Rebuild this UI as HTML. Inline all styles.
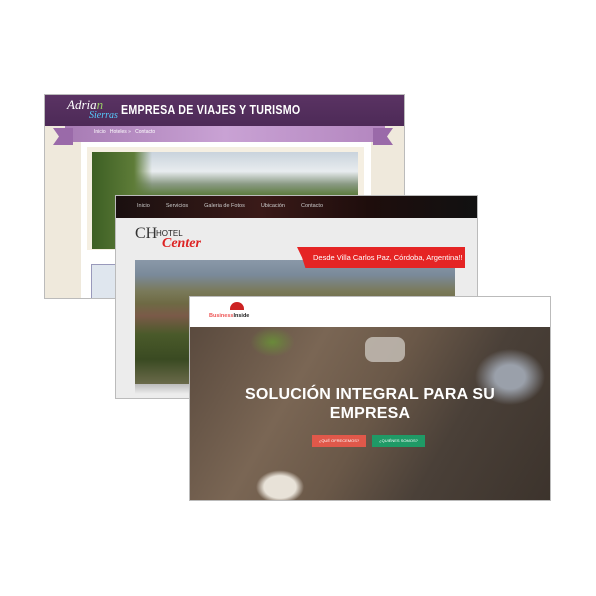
<!DOCTYPE html>
<html><head><style>
body{margin:0;width:596px;height:596px;background:#fff;position:relative;overflow:hidden;font-family:"Liberation Sans",sans-serif}
.a{position:absolute}
</style></head><body>
<!-- Screen 1 -->
<div class="a" style="left:44px;top:94px;width:361px;height:205px;border:1px solid #bbb;box-sizing:border-box;background:#efe9dc;overflow:hidden">
 <div class="a" style="left:0;top:0;width:100%;height:31px;background:linear-gradient(#5a3363,#4d2a57)"></div>
 <div class="a" style="left:22px;top:2px;font:italic 13px 'Liberation Serif',serif;color:#fff">Adria<span style="color:#9c6">n</span></div>
 <div class="a" style="left:44px;top:15px;font:italic 10px 'Liberation Serif',serif;color:#5cf">Sierras</div>
 <div class="a" style="left:76px;top:7px;font:bold 13px 'Liberation Sans',sans-serif;color:#fff;letter-spacing:0.3px;transform:scaleX(0.82);transform-origin:left">EMPRESA DE VIAJES Y TURISMO</div>
 <div class="a" style="left:20px;top:31px;width:320px;height:16px;background:linear-gradient(90deg,#a77bb4,#c9a2d4,#b386bf)"></div>
 <div class="a" style="left:8px;top:33px;width:20px;height:17px;background:#9a6aa9;clip-path:polygon(0 0,100% 0,100% 100%,0 100%,30% 50%)"></div>
 <div class="a" style="left:328px;top:33px;width:20px;height:17px;background:#9a6aa9;clip-path:polygon(0 0,100% 0,70% 50%,100% 100%,0 100%)"></div>
 <div class="a" style="left:49px;top:34px;font-size:5px;color:#fff">Inicio &nbsp; Hoteles » &nbsp; Contacto</div>
 <div class="a" style="left:36px;top:47px;width:290px;height:160px;background:#fff"></div>
 <div class="a" style="left:42px;top:52px;width:277px;height:103px;background:#f5efe2"></div>
 <div class="a" style="left:47px;top:57px;width:266px;height:97px;background:linear-gradient(180deg,#c9d3dc 0%,#e8ecef 20%,#8a9a84 33%,#5a7a3a 45%,#7c8f56 60%,#556d2f 80%,#8a9a6a 100%)"></div>
 <div class="a" style="left:47px;top:57px;width:60px;height:97px;background:linear-gradient(90deg,#3d5f24,#5e7c38 70%,transparent)"></div>
 <div class="a" style="left:46px;top:169px;width:30px;height:40px;background:#dfe6ee;border:1px solid #99b"></div>
</div>
<!-- Screen 2 -->
<div class="a" style="left:115px;top:195px;width:363px;height:204px;border:1px solid #bbb;box-sizing:border-box;background:#ececec;overflow:hidden">
 <div class="a" style="left:0;top:0;width:100%;height:22px;background:linear-gradient(90deg,#1a1010,#3a1a18 40%,#1e0d0c 70%,#111)"></div>
 <div class="a" style="left:21px;top:7px;font-size:5.5px;color:#ccc;word-spacing:0">Inicio<span style="margin-left:16px">Servicios</span><span style="margin-left:16px">Galeria de Fotos</span><span style="margin-left:16px">Ubicación</span><span style="margin-left:16px">Contacto</span></div>
 <div class="a" style="left:19px;top:29px;font:16px 'Liberation Serif',serif;color:#333">CH</div>
 <div class="a" style="left:40px;top:33px;font:8px 'Liberation Sans',sans-serif;color:#222">HOTEL</div>
 <div class="a" style="left:46px;top:40px;font:italic bold 14px 'Liberation Serif',serif;color:#d22">Center</div>
 <div class="a" style="left:19px;top:64px;width:320px;height:124px;background:linear-gradient(180deg,#8a98a8 0%,#7a8a9a 12%,#7a7a5a 25%,#6e6a44 35%,#7a5a48 45%,#4a5a2a 60%,#3a4a22 80%,#6a6a4a 100%)"></div>
 <div class="a" style="left:19px;top:188px;width:320px;height:10px;background:linear-gradient(#bbb,#ececec)"></div>
 <div class="a" style="left:181px;top:51px;width:168px;height:21px;background:#e52424;clip-path:polygon(0 0,100% 0,100% 100%,5% 100%,3% 50%)"></div>
 <div class="a" style="left:197px;top:57px;font-size:7.5px;color:#fff">Desde Villa Carlos Paz, Córdoba, Argentina!!</div>
</div>
<!-- Screen 3 -->
<div class="a" style="left:189px;top:296px;width:362px;height:205px;border:1px solid #bbb;box-sizing:border-box;background:#fff;overflow:hidden">
 <div class="a" style="left:40px;top:5px;width:14px;height:8px;border-radius:8px 8px 0 0;background:#c22"></div>
 <div class="a" style="left:19px;top:16px;font:bold 5.5px 'Liberation Sans',sans-serif;color:#e55">Business<span style="color:#222">Inside</span></div>
 <div class="a" style="left:0;top:30px;width:100%;height:175px;background:
 radial-gradient(ellipse 40px 28px at 90px 160px,#e8e2d8 40%,transparent 60%),
 radial-gradient(ellipse 50px 40px at 320px 50px,#9aa0aa 30%,transparent 70%),
 linear-gradient(120deg,#5a4a3e 0%,#7a6654 30%,#6a5848 50%,#4a4038 70%,#3c332c 100%)"></div>
 <div class="a" style="left:60px;top:30px;width:45px;height:30px;background:radial-gradient(#6a8a3a,transparent 70%)"></div>
 <div class="a" style="left:175px;top:40px;width:40px;height:25px;border-radius:8px;background:#c9c3bb;opacity:.8"></div>
 <div class="a" style="left:0;top:88px;width:100%;text-align:center;font:bold 16px 'Liberation Sans',sans-serif;color:#fff;line-height:19px;letter-spacing:0.2px">SOLUCIÓN INTEGRAL PARA SU<br>EMPRESA</div>
 <div class="a" style="left:122px;top:138px;width:54px;height:12px;background:#e0584a;color:#fff;font-size:4px;line-height:12px;text-align:center">¿QUÉ OFRECEMOS?</div>
 <div class="a" style="left:182px;top:138px;width:53px;height:12px;background:#1f9a66;color:#fff;font-size:4px;line-height:12px;text-align:center">¿QUIÉNES SOMOS?</div>
</div>
</body></html>
